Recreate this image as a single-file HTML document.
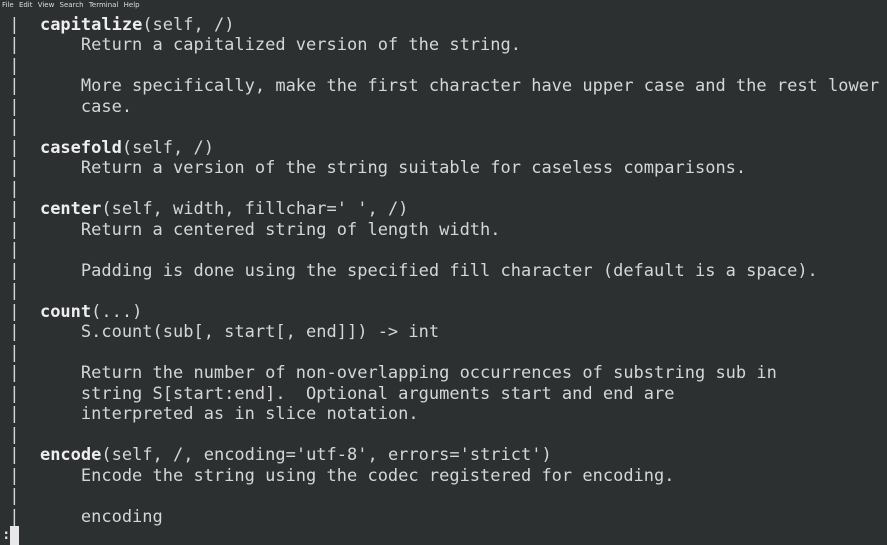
<!DOCTYPE html><html><head><style>
body{margin:0;width:887px;height:545px;background:#2c3031;overflow:hidden;position:relative}
.menu{position:absolute;top:1px;left:2px;font:7px "DejaVu Sans",sans-serif;color:#ddd;word-spacing:3px}
pre{position:absolute;top:14.5px;left:-1px;margin:0;font:17px "DejaVu Sans Mono","Liberation Mono",monospace;line-height:20.5px;color:#d6d6d6}
b{color:#eee}
.cur{position:absolute;left:10px;top:526px;width:9px;height:19px;background:#e8e8e8}
.col{position:absolute;left:2px;top:527px;font:bold 14px "DejaVu Sans Mono",monospace;color:#ddd}
</style></head><body>
<div class="menu">File Edit View Search Terminal Help</div>
<pre> |  <b>capitalize</b>(self, /)
 |      Return a capitalized version of the string.
 |
 |      More specifically, make the first character have upper case and the rest lower
 |      case.
 |
 |  <b>casefold</b>(self, /)
 |      Return a version of the string suitable for caseless comparisons.
 |
 |  <b>center</b>(self, width, fillchar=' ', /)
 |      Return a centered string of length width.
 |
 |      Padding is done using the specified fill character (default is a space).
 |
 |  <b>count</b>(...)
 |      S.count(sub[, start[, end]]) -&gt; int
 |
 |      Return the number of non-overlapping occurrences of substring sub in
 |      string S[start:end].  Optional arguments start and end are
 |      interpreted as in slice notation.
 |
 |  <b>encode</b>(self, /, encoding='utf-8', errors='strict')
 |      Encode the string using the codec registered for encoding.
 |
 |      encoding</pre>
<div class="col">:</div><div class="cur"></div>
</body></html>
